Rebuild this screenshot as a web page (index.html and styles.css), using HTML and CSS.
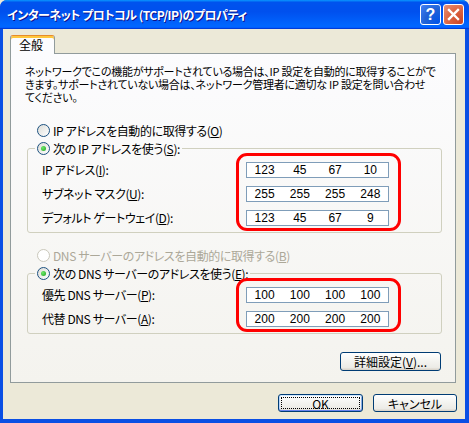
FILE: index.html
```html
<!DOCTYPE html>
<html lang="ja">
<head>
  <meta charset="UTF-8" />
  <title>インターネット プロトコル (TCP/IP)のプロパティ</title>
  <link rel="stylesheet" href="styles.css">
</head>
<body>
  <div class="window">
    <div class="titlebar">
      <span class="title">インターネット プロトコル (TCP/IP)のプロパティ</span>
      <div class="caption">
        <span class="cap-btn help">?</span>
        <span class="cap-btn close">
          <svg width="13" height="13" viewBox="0 0 13 13">
            <path d="M2 2 L11 11 M11 2 L2 11" stroke="#fff" stroke-width="2.4" stroke-linecap="square" />
          </svg>
        </span>
      </div>
    </div>

    <div class="client">
      <div class="tabs"><span class="tab">全般</span></div>

      <div class="panel">
        <p class="intro">ネットワークでこの機能がサポートされている場合は、IP 設定を自動的に取得することがで<br>きます。サポートされていない場合は、ネットワーク管理者に適切な IP 設定を問い合わせ<br>てください。</p>

        <div class="option first"><span class="radio"></span><span>IP アドレスを自動的に取得する(<u>O</u>)</span></div>

        <fieldset class="group">
          <legend class="option"><span class="radio on"></span><span>次の IP アドレスを使う(<u>S</u>):</span></legend>
          <div class="group-body">
            <div class="labels">
              <span>IP アドレス(<u>I</u>):</span>
              <span>サブネット マスク(<u>U</u>):</span>
              <span>デフォルト ゲートウェイ(<u>D</u>):</span>
            </div>
            <div class="mark">
              <div class="ipbox"><span>123</span><span>45</span><span>67</span><span>10</span></div>
              <div class="ipbox"><span>255</span><span>255</span><span>255</span><span>248</span></div>
              <div class="ipbox"><span>123</span><span>45</span><span>67</span><span>9</span></div>
            </div>
          </div>
        </fieldset>

        <div class="option disabled"><span class="radio"></span><span>DNS サーバーのアドレスを自動的に取得する(<u>B</u>)</span></div>

        <fieldset class="group">
          <legend class="option"><span class="radio on"></span><span>次の DNS サーバーのアドレスを使う(<u>E</u>):</span></legend>
          <div class="group-body">
            <div class="labels">
              <span>優先 DNS サーバー(<u>P</u>):</span>
              <span>代替 DNS サーバー(<u>A</u>):</span>
            </div>
            <div class="mark">
              <div class="ipbox"><span>100</span><span>100</span><span>100</span><span>100</span></div>
              <div class="ipbox"><span>200</span><span>200</span><span>200</span><span>200</span></div>
            </div>
          </div>
        </fieldset>

        <button class="btn advanced">詳細設定(<u>V</u>)...</button>
      </div>

      <div class="actions">
        <button class="btn default">OK</button>
        <button class="btn">キャンセル</button>
      </div>
    </div>
  </div>
</body>
</html>
```

FILE: styles.css
```css
* {
  box-sizing: border-box;
}

body {
  margin: 0;
  background: #ece9d8;
  font-family: "Noto Sans CJK JP", "Liberation Sans", sans-serif;
  font-size: 12px;
  font-feature-settings: "palt";
  color: #000;
}

/* ウィンドウ枠 */
.window {
  width: 469px;
  height: 423px;
  display: flex;
  flex-direction: column;
  background: #0a4fe4;
  border-radius: 7px 7px 0 0;
  overflow: hidden;
}

.titlebar {
  height: 29px;
  flex: none;
  display: flex;
  align-items: center;
  justify-content: space-between;
  padding: 0 5px 0 7px;
  background: linear-gradient(#0997ff 0%, #0053ee 8%, #0050ee 40%, #0066ff 88%, #0066ff 93%, #005bff 95%, #003dd7 96%, #003dd7 100%);
}

.title {
  color: #fff;
  font-weight: bold;
  font-size: 12px;
  letter-spacing: -0.5px;
  text-shadow: 1px 1px #0f1089;
  white-space: nowrap;
}

.caption {
  display: flex;
  gap: 2px;
}

.cap-btn {
  width: 21px;
  height: 21px;
  border: 1px solid #fff;
  border-radius: 3px;
  display: flex;
  align-items: center;
  justify-content: center;
  color: #fff;
  font-weight: bold;
  font-size: 16px;
  font-family: "Liberation Sans", sans-serif;
}

.help {
  background: radial-gradient(circle at 90% 90%, #0054e9 0%, #2263d5 55%, #4382f6 100%);
}

.close {
  background: radial-gradient(circle at 90% 90%, #cc4627 0%, #dc6643 55%, #e5937a 100%);
}

/* クライアント領域 */
.client {
  flex: 1;
  margin: 0 4px 4px 3px;
  background: #ece9d8;
  padding: 6px 8px 0 7px;
  display: flex;
  flex-direction: column;
}

.tabs {
  display: flex;
  height: 18px;
}

.tab {
  width: 45px;
  height: 19px;
  position: relative;
  z-index: 1;
  background: #fcfcfe;
  border: 1px solid #919b9c;
  border-top: 1px solid #e68b2c;
  border-bottom: none;
  border-radius: 3px 3px 0 0;
  box-shadow: inset 0 2px #ffc73c;
  text-align: center;
  line-height: 17px;
  padding-right: 3px;
}

.panel {
  height: 330px;
  margin-right: 1px;
  border: 1px solid #919b9c;
  background: linear-gradient(#fcfcfe, #f4f3ee);
  padding: 11px 13px 0 14px;
  display: flex;
  flex-direction: column;
  letter-spacing: -0.4px;
}

.intro {
  margin: 0;
  font-size: 11px;
  letter-spacing: -0.25px;
  line-height: 13px;
  white-space: nowrap;
}

/* ラジオボタン */
.option {
  display: flex;
  align-items: center;
  gap: 3px;
  height: 14px;
  margin-left: 12px;
  white-space: nowrap;
}

.option.first {
  margin-top: 19px;
}

.radio {
  width: 13px;
  height: 13px;
  flex: none;
  border-radius: 50%;
  border: 1px solid #1c5180;
  background: linear-gradient(135deg, #dcdcd7, #ffffff);
  display: flex;
  align-items: center;
  justify-content: center;
}

.radio.on::after {
  content: "";
  width: 5px;
  height: 5px;
  border-radius: 50%;
  background: radial-gradient(circle at 35% 35%, #6ee96a, #21a121);
}

.disabled {
  color: #aca899;
  margin-top: 15px;
}

.disabled .radio {
  border-color: #cac8bb;
  background: #fff;
}

/* グループボックス */
.group {
  margin: 4px 0 0 2px;
  padding: 0 40px 1px 7px;
  border: 1px solid #d0d0bf;
  border-radius: 3px;
  min-width: 0;
}

.group legend.option {
  margin: 0;
  padding: 0 2px;
}

.group-body {
  display: flex;
  margin-top: -2px;
}

.labels {
  flex: 1;
  display: flex;
  flex-direction: column;
  gap: 8px;
  padding: 9px 0 0 7px;
}

.labels span {
  height: 16px;
  line-height: 16px;
  white-space: nowrap;
}

.mark {
  width: 165px;
  border: 3px solid #ff0000;
  border-radius: 11px;
  padding: 6px 9px 2px 7px;
  display: flex;
  flex-direction: column;
  gap: 8px;
}

.ipbox {
  height: 16px;
  border: 1px solid #7f9db9;
  background: #fff;
  display: flex;
}

.ipbox span {
  flex: 1;
  text-align: center;
  line-height: 14px;
  letter-spacing: 0;
  font-family: "Liberation Sans", sans-serif;
}

/* ボタン */
.btn {
  font: inherit;
  height: 18px;
  width: 85px;
  padding: 0;
  color: #000;
  border: 1px solid #003c74;
  border-radius: 3px;
  background: linear-gradient(#ffffff, #f3f3ef 50%, #ecebe6 85%, #d6d0c5);
  line-height: 15px;
}

.advanced {
  align-self: flex-end;
  margin: 18px 1px 0 0;
  width: 101px;
  height: 19px;
}

.actions {
  display: flex;
  justify-content: flex-end;
  gap: 10px;
  margin-top: 11px;
}

.actions .btn:last-child {
  width: 84px;
}

.default {
  box-shadow: inset 0 1px #cee7ff, inset 0 -1px #6982ee, inset 1px 0 #b8d6fb, inset -1px 0 #89ade4;
  outline: 1px dotted #000;
  outline-offset: -4px;
}
```
